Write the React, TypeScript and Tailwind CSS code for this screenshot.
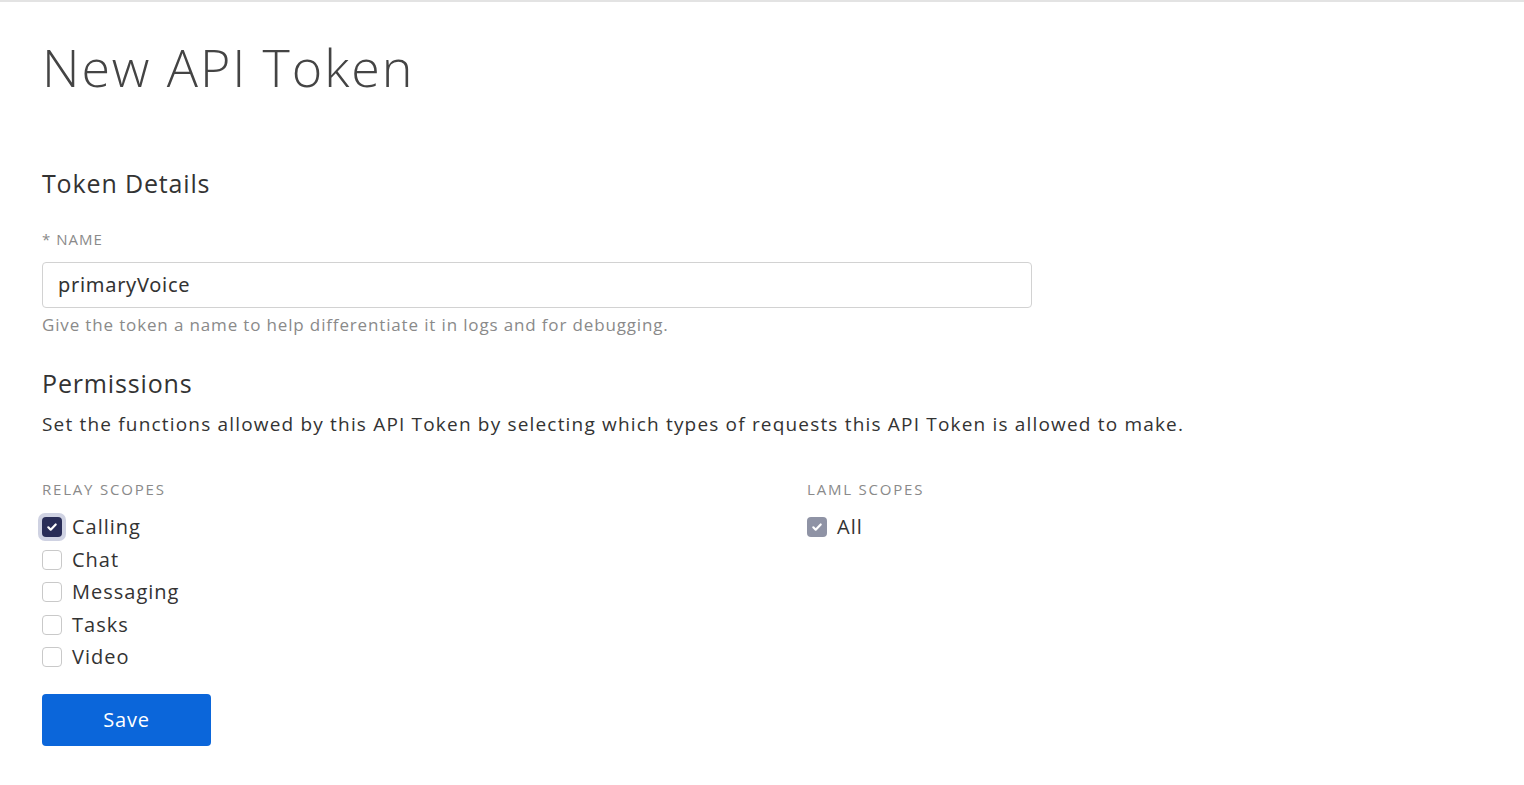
import React from "react";

const font = { fontFamily: '"Open Sans", "Noto Sans", sans-serif' };

function Check({ state, label }: { state: "focus" | "off" | "muted"; label: string }) {
  return (
    <div className="flex items-center h-[32.5px]">
      <div className="relative w-[20px] h-[20px] shrink-0">
        {state === "focus" && (
          <div className="absolute -inset-[4px] rounded-[7px] bg-[#cfd2e2]" />
        )}
        {state === "off" ? (
          <div className="absolute inset-0 rounded-[4px] border border-[#c9c9c9] bg-white" />
        ) : (
          <div
            className={
              "absolute inset-0 rounded-[4px] flex items-center justify-center " +
              (state === "focus" ? "bg-[#292d57]" : "bg-[#8f93a5]")
            }
          >
            <svg width="12" height="12" viewBox="0 0 12 12" fill="none">
              <path d="M2.3 6.3l2.4 2.4 5-5.2" stroke="white" strokeWidth="2.2" strokeLinecap="round" strokeLinejoin="round" />
            </svg>
          </div>
        )}
      </div>
      <span className="ml-[10px] text-[20px] leading-[26px] tracking-[1px] text-[#333]">{label}</span>
    </div>
  );
}

export default function App() {
  return (
    <div style={font} className="min-h-screen bg-white border-t-2 border-[#e3e3e3] px-[42px]">
      <h1 className="mt-[35px] text-[52px] leading-[60px] font-light tracking-[1.9px] text-[#444] whitespace-nowrap">
        New API Token
      </h1>
      <h2 className="mt-[70px] text-[25px] leading-[32px] tracking-[0.85px] text-[#333]">Token Details</h2>
      <div className="mt-[30px] text-[15px] leading-[20px] tracking-[1px] text-[#8a8a8a]">* NAME</div>
      <div className="mt-[13px] w-[990px] h-[46px] rounded-[4px] border border-[#d2d2d2] flex items-center pl-[15px]">
        <span style={{ fontFamily: '"Noto Sans", sans-serif' }} className="text-[20px] tracking-[0.7px] text-[#333]">
          primaryVoice
        </span>
      </div>
      <p className="mt-[6px] text-[17px] leading-[22px] tracking-[0.85px] text-[#8a8a8a]">
        Give the token a name to help differentiate it in logs and for debugging.
      </p>
      <h2 className="mt-[31px] text-[25px] leading-[32px] tracking-[0.85px] text-[#333]">Permissions</h2>
      <p className="mt-[12px] text-[19px] leading-[26px] tracking-[1.18px] text-[#333] whitespace-nowrap">
        Set the functions allowed by this API Token by selecting which types of requests this API Token is allowed to make.
      </p>
      <div className="mt-[42px] grid grid-cols-[765px_1fr]">
        <div>
          <div className="text-[15px] leading-[20px] tracking-[1.8px] text-[#8a8a8a]">RELAY SCOPES</div>
          <div className="mt-[12px]">
            <Check state="focus" label="Calling" />
            <Check state="off" label="Chat" />
            <Check state="off" label="Messaging" />
            <Check state="off" label="Tasks" />
            <Check state="off" label="Video" />
          </div>
        </div>
        <div>
          <div className="text-[15px] leading-[20px] tracking-[1.8px] text-[#8a8a8a]">LAML SCOPES</div>
          <div className="mt-[12px]">
            <Check state="muted" label="All" />
          </div>
        </div>
      </div>
      <button className="mt-[20px] w-[169px] h-[52px] rounded-[4px] bg-[#0b66da] text-white text-[20px] tracking-[0.8px]">
        Save
      </button>
    </div>
  );
}
